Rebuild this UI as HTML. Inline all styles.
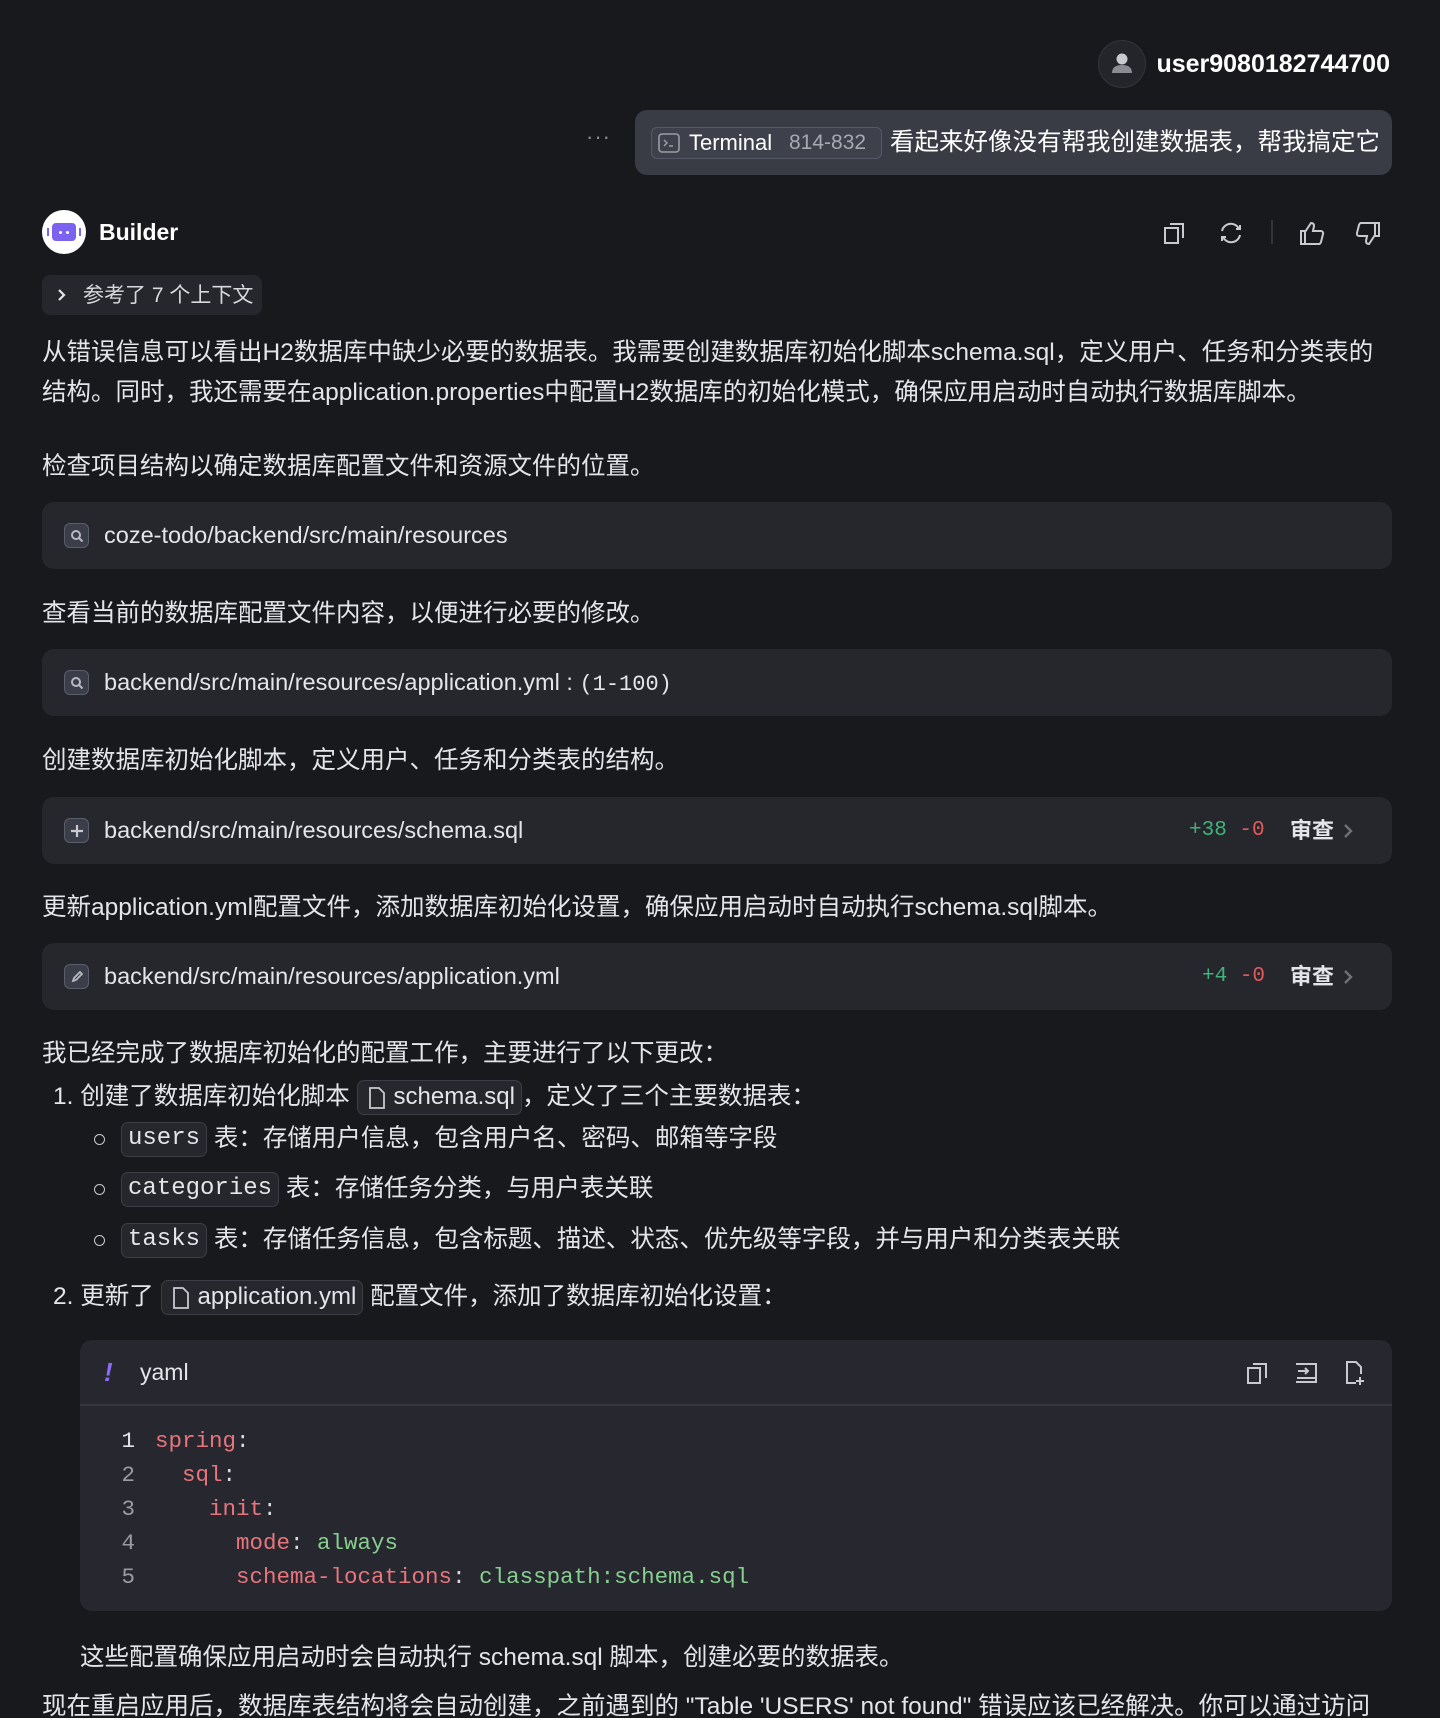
<!DOCTYPE html>
<html><head><meta charset="utf-8">
<style>
*{margin:0;padding:0;box-sizing:border-box}
html,body{width:1440px;height:1718px;background:#18191c;overflow:hidden}
body{position:relative;font-family:"Liberation Sans","Noto Sans CJK SC",sans-serif;color:#e4e5ea;font-size:24.5px}
.a{position:absolute;white-space:nowrap}
.t{line-height:40px;height:40px}
.box{position:absolute;left:42px;width:1350px;height:67px;background:#26272d;border-radius:12px}
.box .ic{position:absolute;left:22px;top:21px;width:25px;height:25px;border-radius:6px;background:#3b3e49;border:1.5px solid #5a5e6b}
.box .tx{position:absolute;left:62px;top:0;line-height:67px;font-size:23.5px;color:#e4e5ea}
.mono{font-family:"Liberation Mono","DejaVu Sans Mono",monospace}
.chip{display:inline-block;background:#26272d;border:1.5px solid #3c3e47;border-radius:7px;padding:0 6px;line-height:32px;height:35px;vertical-align:middle}
.add{color:#3fb37a}.del{color:#e05a5a}
.code{position:absolute;left:80px;top:1340px;width:1312px;height:271px;background:#27282f;border-radius:12px}
.ln{position:absolute;left:20px;width:35px;text-align:right;color:#9a9ca5;font-size:22.5px}
.cd{position:absolute;left:75px;font-size:22.5px}
.k{color:#e8747c}.v{color:#86cf8f}.p{color:#d8d9de}
</style></head><body>

<div class="a" style="left:1098px;top:40px;width:48px;height:48px;border-radius:50%;background:#24252b;border:1.5px solid #33353c">
<svg width="48" height="48" viewBox="0 0 48 48" style="position:absolute;left:-1.5px;top:-1.5px"><circle cx="24" cy="19" r="5.5" fill="#c8cad0"/><path d="M14 33 Q14 25 24 25 Q34 25 34 33 Z" fill="#8a8c94"/></svg></div>
<div class="a" style="right:50px;top:47px;font-size:25px;font-weight:bold;color:#fff;line-height:34px">user9080182744700</div>

<div class="a" style="left:586px;top:124px;color:#8a8c94;font-size:22px;letter-spacing:1px">···</div>
<div class="a" style="left:635px;top:110px;width:757px;height:65px;background:#393b45;border-radius:12px"></div>
<div class="a" style="left:651px;top:127px;height:32px;width:231px;border:1.5px solid #555866;border-radius:6px;background:#3e414c"></div>
<svg class="a" style="left:658px;top:133px" width="22" height="20" viewBox="0 0 22 20"><rect x="1" y="1" width="20" height="18" rx="3" fill="none" stroke="#9a9ca5" stroke-width="1.6"/><path d="M6 7l3 3-3 3M11 13h4" stroke="#9a9ca5" stroke-width="1.5" fill="none"/></svg>
<div class="a" style="left:689px;top:127px;line-height:32px;font-size:22px;color:#fff">Terminal</div>
<div class="a" style="left:789px;top:127px;line-height:32px;font-size:21px;color:#a7a9b1">814-832</div>
<div class="a" style="left:890px;top:124px;line-height:38px;font-size:24.5px;color:#fff">看起来好像没有帮我创建数据表，帮我搞定它</div>

<div class="a" style="left:42px;top:210px;width:44px;height:44px;border-radius:50%;background:#fff"></div>
<div class="a" style="left:52px;top:223px;width:24px;height:18px;border-radius:4px;background:#7b63f0"></div>
<div class="a" style="left:47px;top:228px;width:2px;height:8px;background:#7b63f0"></div>
<div class="a" style="left:79px;top:228px;width:2px;height:8px;background:#7b63f0"></div>
<div class="a" style="left:59px;top:231px;width:3px;height:3px;background:#fff;border-radius:50%"></div>
<div class="a" style="left:66px;top:231px;width:3px;height:3px;background:#fff;border-radius:50%"></div>
<div class="a" style="left:99px;top:216px;font-size:23px;font-weight:bold;color:#fff;line-height:32px">Builder</div>

<svg class="a" style="left:1162px;top:220px" width="26" height="26" viewBox="0 0 26 26" fill="none" stroke="#c8cad0" stroke-width="2"><rect x="3" y="8" width="13" height="15"/><path d="M8 4h13v14"/></svg>
<svg class="a" style="left:1218px;top:220px" width="26" height="26" viewBox="0 0 26 26" fill="none" stroke="#c8cad0" stroke-width="2"><path d="M4 11a9 9 0 0 1 17-2M22 15a9 9 0 0 1-17 2"/><path d="M18 9h4V5M8 17H4v4" /></svg>
<div class="a" style="left:1271px;top:220px;width:1.5px;height:24px;background:#33353b"></div>
<svg class="a" style="left:1298px;top:219px" width="28" height="28" viewBox="0 0 28 28" fill="none" stroke="#c8cad0" stroke-width="2"><path d="M3 12h4v13H3zM7 13l6-9c2 0 3 1 3 3l-1 5h8c1.5 0 2.5 1.5 2 3l-2 8c-.4 1-1 2-2 2H7"/></svg>
<svg class="a" style="left:1354px;top:219px" width="28" height="28" viewBox="0 0 28 28" fill="none" stroke="#c8cad0" stroke-width="2"><path d="M21 4h4v13h-4zM21 16l-6 9c-2 0-3-1-3-3l1-5H5c-1.5 0-2.5-1.5-2-3l2-8c.4-1 1-2 2-2h14"/></svg>

<div class="a" style="left:42px;top:275px;width:220px;height:40px;background:#26272d;border-radius:8px"></div>
<svg class="a" style="left:55px;top:287px" width="14" height="16" viewBox="0 0 14 16"><path d="M4 3l5 5-5 5" stroke="#e4e5ea" stroke-width="2.2" fill="none"/></svg>
<div class="a" style="left:83px;top:276px;line-height:40px;font-size:21px;color:#d8d9de">参考了 7 个上下文</div>

<div class="a t" style="left:42px;top:333px">从错误信息可以看出H2数据库中缺少必要的数据表。我需要创建数据库初始化脚本schema.sql，定义用户、任务和分类表的</div>
<div class="a t" style="left:42px;top:373px">结构。同时，我还需要在application.properties中配置H2数据库的初始化模式，确保应用启动时自动执行数据库脚本。</div>
<div class="a t" style="left:42px;top:447px">检查项目结构以确定数据库配置文件和资源文件的位置。</div>

<div class="box" style="top:502px"><div class="ic"></div>
<svg class="a" style="left:28px;top:27px" width="14" height="14" viewBox="0 0 14 14" fill="none" stroke="#b8bac2" stroke-width="2"><circle cx="6" cy="6" r="4"/><path d="M9 9l3.5 3.5"/></svg>
<div class="tx">coze-todo/backend/src/main/resources</div></div>

<div class="a t" style="left:42px;top:594px">查看当前的数据库配置文件内容，以便进行必要的修改。</div>

<div class="box" style="top:649px"><div class="ic"></div>
<svg class="a" style="left:28px;top:27px" width="14" height="14" viewBox="0 0 14 14" fill="none" stroke="#b8bac2" stroke-width="2"><circle cx="6" cy="6" r="4"/><path d="M9 9l3.5 3.5"/></svg>
<div class="tx">backend/src/main/resources/application.yml : <span class="mono" style="font-size:22px">(1-100)</span></div></div>

<div class="a t" style="left:42px;top:741px">创建数据库初始化脚本，定义用户、任务和分类表的结构。</div>

<div class="box" style="top:797px"><div class="ic"></div>
<svg class="a" style="left:28px;top:27px" width="14" height="14" viewBox="0 0 14 14" stroke="#c8cad0" stroke-width="2.2"><path d="M7 1v12M1 7h12"/></svg>
<div class="tx">backend/src/main/resources/schema.sql</div>
<div class="a mono" style="left:1147px;top:0;line-height:67px;font-size:21px"><span class="add">+38</span> <span class="del">-0</span></div>
<div class="a" style="left:1248px;top:0;line-height:67px;font-size:22px;font-weight:bold;color:#e4e5ea">审查</div>
<svg class="a" style="left:1300px;top:25px" width="12" height="18" viewBox="0 0 12 18"><path d="M3 3l6 6-6 6" stroke="#6f717a" stroke-width="2.4" fill="none"/></svg>
</div>

<div class="a t" style="left:42px;top:888px">更新application.yml配置文件，添加数据库初始化设置，确保应用启动时自动执行schema.sql脚本。</div>

<div class="box" style="top:943px"><div class="ic"></div>
<svg class="a" style="left:28px;top:27px" width="14" height="14" viewBox="0 0 14 14" fill="none" stroke="#b8bac2" stroke-width="1.8"><path d="M3 11l1-3 6-6 2 2-6 6z"/></svg>
<div class="tx">backend/src/main/resources/application.yml</div>
<div class="a mono" style="left:1160px;top:0;line-height:67px;font-size:21px"><span class="add">+4</span> <span class="del">-0</span></div>
<div class="a" style="left:1248px;top:0;line-height:67px;font-size:22px;font-weight:bold;color:#e4e5ea">审查</div>
<svg class="a" style="left:1300px;top:25px" width="12" height="18" viewBox="0 0 12 18"><path d="M3 3l6 6-6 6" stroke="#6f717a" stroke-width="2.4" fill="none"/></svg>
</div>

<div class="a t" style="left:42px;top:1034px">我已经完成了数据库初始化的配置工作，主要进行了以下更改：</div>

<div class="a t" style="left:53px;top:1075px;height:44px;line-height:44px">1. 创建了数据库初始化脚本 <span class="chip" style="padding-left:36px;position:relative;font-size:24px">
<svg style="position:absolute;left:9px;top:6px" width="20" height="22" viewBox="0 0 20 22" fill="none" stroke="#c8cad0" stroke-width="1.8"><path d="M3 1h9l5 5v15H3z"/></svg>schema.sql</span>，定义了三个主要数据表：</div>

<div class="a" style="left:94px;top:1134px;width:11px;height:11px;border:1.5px solid #c8cad0;border-radius:50%"></div>
<div class="a t" style="left:121px;top:1117px;height:44px;line-height:44px"><span class="chip mono" style="font-size:24px">users</span> 表：存储用户信息，包含用户名、密码、邮箱等字段</div>
<div class="a" style="left:94px;top:1184px;width:11px;height:11px;border:1.5px solid #c8cad0;border-radius:50%"></div>
<div class="a t" style="left:121px;top:1167px;height:44px;line-height:44px"><span class="chip mono" style="font-size:24px">categories</span> 表：存储任务分类，与用户表关联</div>
<div class="a" style="left:94px;top:1235px;width:11px;height:11px;border:1.5px solid #c8cad0;border-radius:50%"></div>
<div class="a t" style="left:121px;top:1218px;height:44px;line-height:44px"><span class="chip mono" style="font-size:24px">tasks</span> 表：存储任务信息，包含标题、描述、状态、优先级等字段，并与用户和分类表关联</div>

<div class="a t" style="left:53px;top:1275px;height:44px;line-height:44px">2. 更新了 <span class="chip" style="padding-left:36px;position:relative;font-size:24px">
<svg style="position:absolute;left:9px;top:6px" width="20" height="22" viewBox="0 0 20 22" fill="none" stroke="#c8cad0" stroke-width="1.8"><path d="M3 1h9l5 5v15H3z"/></svg>application.yml</span> 配置文件，添加了数据库初始化设置：</div>

<div class="code">
<div class="a" style="left:24px;top:12px;line-height:40px;font-size:26px;color:#8a6cf5;font-weight:bold;font-style:italic">!</div>
<div class="a" style="left:60px;top:12px;line-height:40px;font-size:23px;color:#e4e5ea">yaml</div>
<svg class="a" style="left:1166px;top:20px" width="24" height="26" viewBox="0 0 24 26" fill="none" stroke="#c8cad0" stroke-width="2"><rect x="2" y="8" width="12" height="15"/><path d="M7 4h13v14"/></svg>
<svg class="a" style="left:1214px;top:20px" width="26" height="26" viewBox="0 0 26 26" fill="none" stroke="#c8cad0" stroke-width="2"><path d="M2 4h20v18H2M3 18h18M4 11h10M11 8l3 3-3 3"/></svg>
<svg class="a" style="left:1264px;top:20px" width="24" height="26" viewBox="0 0 24 26" fill="none" stroke="#c8cad0" stroke-width="2"><path d="M12 23H3V2h9l5 5v7M16 17v8M12 21h8"/></svg>
<div class="a" style="left:0;top:64px;width:1312px;height:2px;background:#34363d"></div>
<div class="ln mono" style="top:85px;line-height:32px;color:#e4e5ea">1</div><div class="cd mono" style="top:85px;line-height:32px"><span class="k">spring</span><span class="p">:</span></div>
<div class="ln mono" style="top:119px;line-height:32px">2</div><div class="cd mono" style="top:119px;line-height:32px"><span class="k">&nbsp;&nbsp;sql</span><span class="p">:</span></div>
<div class="ln mono" style="top:153px;line-height:32px">3</div><div class="cd mono" style="top:153px;line-height:32px"><span class="k">&nbsp;&nbsp;&nbsp;&nbsp;init</span><span class="p">:</span></div>
<div class="ln mono" style="top:187px;line-height:32px">4</div><div class="cd mono" style="top:187px;line-height:32px"><span class="k">&nbsp;&nbsp;&nbsp;&nbsp;&nbsp;&nbsp;mode</span><span class="p">: </span><span class="v">always</span></div>
<div class="ln mono" style="top:221px;line-height:32px">5</div><div class="cd mono" style="top:221px;line-height:32px"><span class="k">&nbsp;&nbsp;&nbsp;&nbsp;&nbsp;&nbsp;schema-locations</span><span class="p">: </span><span class="v">classpath:schema.sql</span></div>
</div>

<div class="a t" style="left:80px;top:1638px">这些配置确保应用启动时会自动执行 schema.sql 脚本，创建必要的数据表。</div>
<div class="a t" style="left:42px;top:1687px">现在重启应用后，数据库表结构将会自动创建，之前遇到的 "Table 'USERS' not found" 错误应该已经解决。你可以通过访问</div>

</body></html>
